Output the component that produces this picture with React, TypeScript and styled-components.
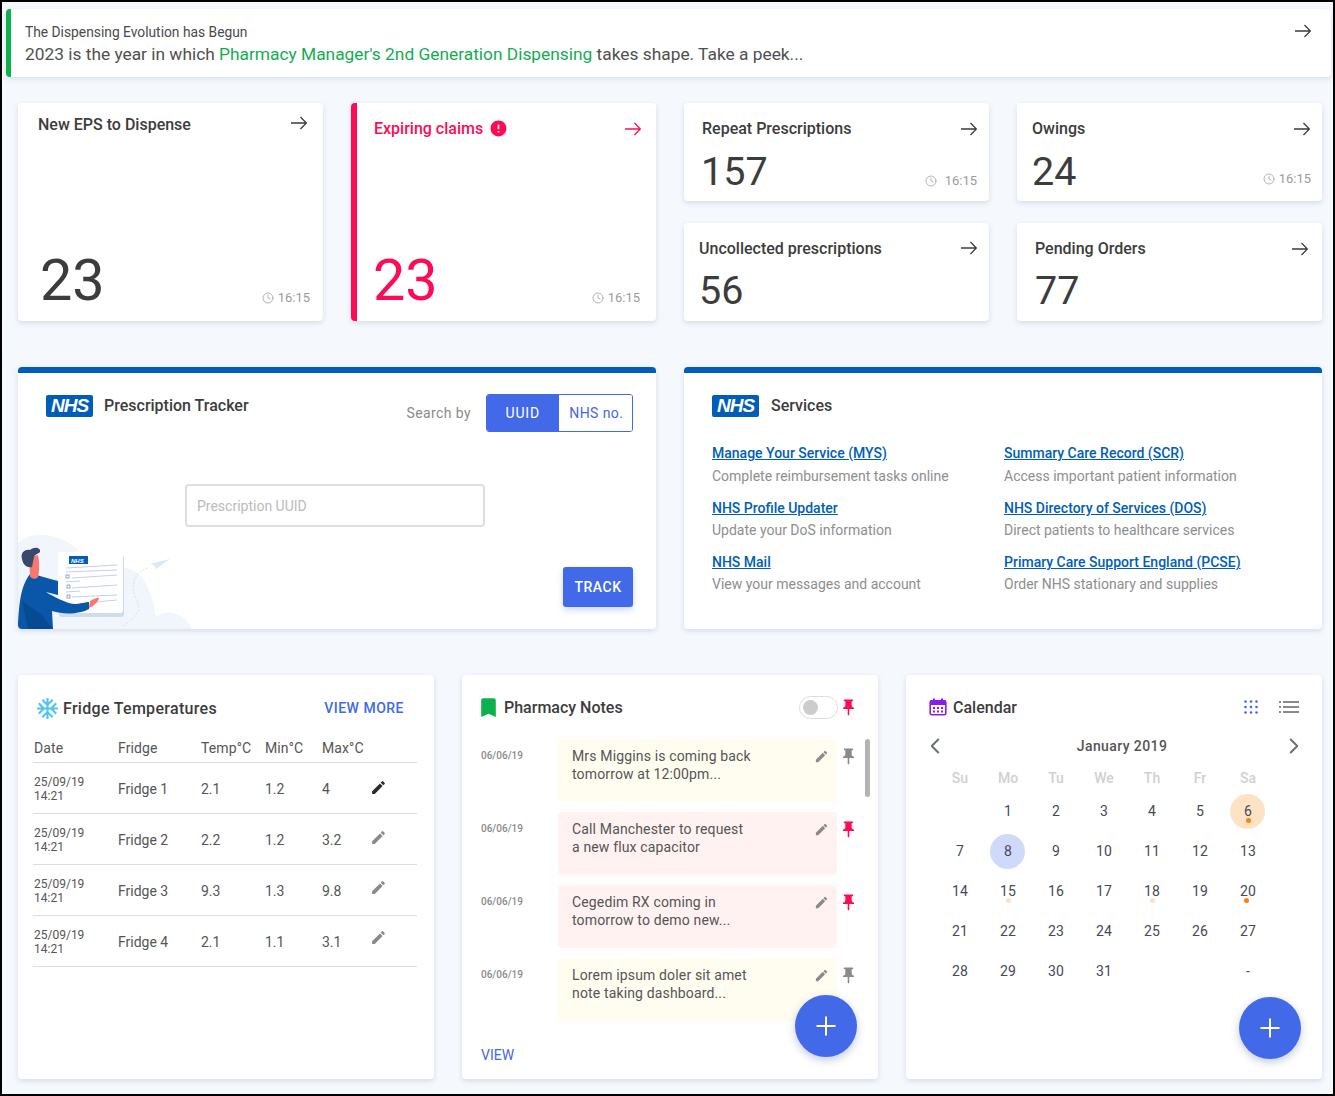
import styled, { createGlobalStyle } from 'styled-components';
import { ChevronLeft, ChevronRight, Clock, Plus } from 'lucide-react';
import { MdAcUnit, MdBookmark, MdEdit, MdError, MdPushPin } from 'react-icons/md';

const BLUE = '#4169e8';
const NHS_BLUE = '#005eb8';
const RED = '#ff0a54';

const GlobalStyle = createGlobalStyle`
  html, body { margin: 0; padding: 0; }
  body {
    font-family: Roboto, "Liberation Sans", sans-serif;
    color: #3c3c3c;
    background: #f5f8fd;
  }
  * { box-sizing: border-box; }
`;

function Arrow() {
  return (
    <svg width="16" height="14" viewBox="0 0 16 14" fill="none" stroke="currentColor" strokeWidth="1.3" aria-hidden="true">
      <path d="M0 7 H15 M9.5 1 L15.4 7 L9.5 13" />
    </svg>
  );
}

type StatProps = {
  title: string;
  value: number;
  time?: string;
  danger?: boolean;
  big?: boolean;
  top?: number;
  left?: number;
  arrowRight?: number;
  arrowDrop?: number;
  numberLeft?: number;
  numberLift?: number;
  timeGap?: number;
  timeRight?: number;
  timeBottom?: number;
};

function StatCard({
  title,
  value,
  time,
  danger,
  big,
  top = 16,
  left = 18,
  arrowRight = 12,
  arrowDrop = 0,
  numberLeft = 0,
  numberLift = 0,
  timeGap = 4,
  timeRight = 12,
  timeBottom = 12,
}: StatProps) {
  return (
    <Stat $big={big} $danger={danger} $top={top} $left={left}>
      <StatHead $right={arrowRight} $drop={arrowDrop}>
        <StatTitle>
          {title}
          {danger && <MdError size={19} color={RED} />}
        </StatTitle>
        <Arrow />
      </StatHead>
      <StatFoot>
        <StatNumber $big={big} $danger={danger} $left={numberLeft} $lift={numberLift}>
          {value}
        </StatNumber>
        {time && (
          <StatTime $gap={timeGap} $right={timeRight} $bottom={timeBottom}>
            <Clock size={12} strokeWidth={1.5} />
            {time}
          </StatTime>
        )}
      </StatFoot>
    </Stat>
  );
}

function NhsHeading({ children, gap = 11, lift = 1 }: { children: string; gap?: number; lift?: number }) {
  return (
    <NhsRow $gap={gap}>
      <NhsBadge>NHS</NhsBadge>
      <PanelTitle $lift={lift}>{children}</PanelTitle>
    </NhsRow>
  );
}

function TrackerArt() {
  return (
    <ArtWrap viewBox="0 0 174 94" width="174" height="94" aria-hidden="true">
      <path d="M0 8 C12 -4 42 -4 62 17 L100 34 C120 28 134 50 138 82 C146 74 166 76 174 94 L0 94Z" fill="#f1f6fd" />
      <path d="M130 33 C118 36 113 48 116 58 C118 66 124 72 119 78 C115 84 110 88 105 91" fill="none" stroke="#c4d2e8" strokeWidth="0.6" strokeDasharray="2 1.5" />
      <path d="M132 29 L152 24 L138 34 L136 30Z" fill="#dde7f6" />
      <rect x="41" y="20" width="65" height="62" rx="3" fill="#cfdcf0" />
      <rect x="40" y="17" width="65" height="61" rx="3" fill="#fff" />
      <rect x="51" y="21" width="19" height="8" fill={NHS_BLUE} />
      <ArtText x="53" y="27.5">NHS</ArtText>
      <g stroke="#b5c3e2" strokeWidth="0.8">
        <path d="M48 33 L99 30" />
        <path d="M48 37 L99 35" />
        <path d="M54 43 L99 40" />
        <path d="M48 47 L62 46" />
        <path d="M54 53 L99 50" />
        <path d="M48 57 L62 56" />
        <path d="M54 62 L99 60" />
        <path d="M78 67 L99 65" />
      </g>
      <g fill="#fff" stroke="#6d7fa8" strokeWidth="0.7">
        <rect x="48" y="40" width="3" height="3" />
        <rect x="49" y="50" width="3" height="3" />
        <rect x="49" y="60" width="3" height="3" />
      </g>
      <path d="M13 38 C20 41 30 43 40 46 L40 60 L28 57 C36 62 48 68 56 69 C62 69 68 67 71 67 L71 74 C62 79 46 80 34 76 L35 94 L3 94 C0 94 0 92 0 90 C1 72 2 50 13 38Z" fill="#0a56a8" />
      <path d="M4 66 L24 80 L35 94 L10 94Z" fill="#074a92" />
      <path d="M72 66 C75 65 78 62 81 63 C80 67 76 71 71 73Z" fill="#f9786d" />
      <path d="M11 22 L20 20 C22 30 21 38 20 42 C18 45 13 44 12 41Z" fill="#f9786d" />
      <path d="M4 24 C2 17 8 14 12 15 C17 11 23 13 22 17 C20 19 17 19 16 22 L14 32 C9 33 5 30 4 24Z" fill="#39486e" />
    </ArtWrap>
  );
}

const services = [
  ['Manage Your Service (MYS)', 'Complete reimbursement tasks online', 'Summary Care Record (SCR)', 'Access important patient information'],
  ['NHS Profile Updater', 'Update your DoS information', 'NHS Directory of Services (DOS)', 'Direct patients to healthcare services'],
  ['NHS Mail', 'View your messages and account', 'Primary Care Support England (PCSE)', 'Order NHS stationary and supplies'],
];

const fridges = [
  ['Fridge 1', '2.1', '1.2', '4'],
  ['Fridge 2', '2.2', '1.2', '3.2'],
  ['Fridge 3', '9.3', '1.3', '9.8'],
  ['Fridge 4', '2.1', '1.1', '3.1'],
];

const notes = [
  { lines: ['Mrs Miggins is coming back', 'tomorrow at 12:00pm...'], urgent: false },
  { lines: ['Call Manchester to request', 'a new flux capacitor'], urgent: true },
  { lines: ['Cegedim RX coming in', 'tomorrow to demo new...'], urgent: true },
  { lines: ['Lorem ipsum doler sit amet', 'note taking dashboard...'], urgent: false },
];

const weekDays = ['Su', 'Mo', 'Tu', 'We', 'Th', 'Fr', 'Sa'];

type Day = { label: string; fill?: string; dot?: string; dotShift?: number };

const days: Day[] = [
  { label: '' },
  ...['1', '2', '3', '4', '5'].map((label) => ({ label })),
  { label: '6', fill: '#fde3c4', dot: '#ff7f11' },
  { label: '7' },
  { label: '8', fill: '#cfd9f9' },
  ...['9', '10', '11', '12', '13', '14'].map((label) => ({ label })),
  { label: '15', dot: '#fde3c4' },
  { label: '16' },
  { label: '17' },
  { label: '18', dot: '#fde3c4' },
  { label: '19' },
  { label: '20', dot: '#ff7f11', dotShift: -2 },
  ...['21', '22', '23', '24', '25', '26', '27', '28', '29', '30', '31', '', ''].map((label) => ({ label })),
  { label: '-' },
];

export default function App() {
  return (
    <Page>
      <GlobalStyle />
      <Banner>
        <BannerText>
          <BannerTitle>The Dispensing Evolution has Begun</BannerTitle>
          <BannerBody>
            2023 is the year in which <Green>Pharmacy Manager's 2nd Generation Dispensing</Green> takes shape. Take a peek...
          </BannerBody>
        </BannerText>
        <Arrow />
      </Banner>

      <Content>
        <StatGrid>
          <StatCard big title="New EPS to Dispense" value={23} time="16:15" top={12} left={20} arrowRight={16} arrowDrop={-1} numberLeft={2} timeRight={13} timeBottom={15} />
          <StatCard big danger title="Expiring claims" value={23} time="16:15" top={16} left={17} arrowRight={15} arrowDrop={1} numberLeft={-1} timeRight={16} timeBottom={15} />
          <StatCard title="Repeat Prescriptions" value={157} time="16:15" arrowDrop={1} numberLeft={-1} timeGap={8} />
          <StatCard title="Owings" value={24} time="16:15" left={15} arrowDrop={1} timeRight={11} timeBottom={14} />
          <StatCard title="Uncollected prescriptions" value={56} left={15} numberLift={1} />
          <StatCard title="Pending Orders" value={77} arrowRight={14} arrowDrop={1} numberLift={1} />
        </StatGrid>

        <NhsGrid>
          <TrackerPanel>
            <TrackerHead>
              <NhsHeading>Prescription Tracker</NhsHeading>
              <SearchBy>
                <SearchLabel>Search by</SearchLabel>
                <Toggle>
                  <ToggleOption $active>UUID</ToggleOption>
                  <ToggleOption>NHS no.</ToggleOption>
                </Toggle>
              </SearchBy>
            </TrackerHead>
            <UuidInput placeholder="Prescription UUID" />
            <TrackRow>
              <TrackButton>TRACK</TrackButton>
            </TrackRow>
            <TrackerArt />
          </TrackerPanel>

          <ServicesPanel>
            <NhsHeading gap={12} lift={2}>Services</NhsHeading>
            <ServiceList>
              {services.map(([a, b, c, d]) => (
                <ServiceRow key={a}>
                  <div>
                    <ServiceLink href="#">{a}</ServiceLink>
                    <ServiceText>{b}</ServiceText>
                  </div>
                  <div>
                    <ServiceLink href="#">{c}</ServiceLink>
                    <ServiceText>{d}</ServiceText>
                  </div>
                </ServiceRow>
              ))}
            </ServiceList>
          </ServicesPanel>
        </NhsGrid>

        <BottomGrid>
          <FridgePanel>
            <FridgeHead>
              <FridgeTitle>
                <MdAcUnit size={25} color="#4fc3f7" />
                Fridge Temperatures
              </FridgeTitle>
              <ViewMore href="#">VIEW MORE</ViewMore>
            </FridgeHead>
            <FridgeTable>
              <thead>
                <tr>
                  <FridgeTh $width={84}>Date</FridgeTh>
                  <FridgeTh $width={83}>Fridge</FridgeTh>
                  <FridgeTh $width={64}>Temp°C</FridgeTh>
                  <FridgeTh $width={57}>Min°C</FridgeTh>
                  <FridgeTh $width={50}>Max°C</FridgeTh>
                  <FridgeTh />
                </tr>
              </thead>
              <tbody>
                {fridges.map((row, i) => (
                  <tr key={row[0]}>
                    <FridgeTd>
                      <DateCell>
                        25/09/19
                        <br />
                        14:21
                      </DateCell>
                    </FridgeTd>
                    {row.map((cell, j) => (
                      <FridgeTd key={j}>{cell}</FridgeTd>
                    ))}
                    <FridgeTd>
                      <EditWrap $row={i}>
                        <MdEdit size={17} color={i === 0 ? '#2b2b2b' : '#8a8a8a'} />
                      </EditWrap>
                    </FridgeTd>
                  </tr>
                ))}
              </tbody>
            </FridgeTable>
          </FridgePanel>

          <NotesPanel>
            <NotesHead>
              <PanelHeading $gap={3} $indent={-5}>
                <MdBookmark size={25} color="#0db14b" />
                Pharmacy Notes
              </PanelHeading>
              <NotesTools>
                <Switch>
                  <SwitchKnob />
                </Switch>
                <MdPushPin size={19} color={RED} />
              </NotesTools>
            </NotesHead>
            <NotesScroller>
              <ScrollThumb />
              {notes.map((note) => (
                <NoteRow key={note.lines[0]}>
                  <NoteDate>06/06/19</NoteDate>
                  <NoteBox $urgent={note.urgent}>
                    <NoteText>
                      {note.lines[0]}
                      <br />
                      {note.lines[1]}
                    </NoteText>
                    <MdEdit size={15} color="#8a8a8a" />
                  </NoteBox>
                  <NotePin>
                    <MdPushPin size={19} color={note.urgent ? RED : '#8a8a8a'} />
                  </NotePin>
                </NoteRow>
              ))}
            </NotesScroller>
            <ViewLink href="#">VIEW</ViewLink>
            <Fab $bottom={22} $right={21}>
              <Plus size={30} strokeWidth={1.6} />
            </Fab>
          </NotesPanel>

          <CalendarPanel>
            <CalendarHead>
              <PanelHeading $gap={6} $indent={0}>
                <svg width="18" height="18" viewBox="0 0 18 18" aria-hidden="true">
                  <rect x="1.2" y="2.8" width="15.6" height="14" rx="1.6" fill="#fff" stroke="#8a1cf0" strokeWidth="1.6" />
                  <rect x="1" y="2.5" width="16" height="4.5" fill="#8a1cf0" />
                  <rect x="4" y="0.5" width="2" height="3" fill="#8a1cf0" />
                  <rect x="12" y="0.5" width="2" height="3" fill="#8a1cf0" />
                  <g fill="#8a1cf0">
                    {[4, 8, 12].map((x) =>
                      [9, 12.5].map((y) => <rect key={`${x}-${y}`} x={x} y={y} width="2" height="2" />)
                    )}
                  </g>
                </svg>
                Calendar
              </PanelHeading>
              <CalendarTools>
                <svg width="14" height="14" viewBox="0 0 14 14" aria-hidden="true">
                  <g fill={BLUE}>
                    {[1.5, 7, 12.5].map((x) =>
                      [1.5, 7, 12.5].map((y) => <circle key={`${x}-${y}`} cx={x} cy={y} r="1.3" />)
                    )}
                  </g>
                </svg>
                <svg width="20" height="14" viewBox="0 0 20 14" aria-hidden="true">
                  <g fill="#8a8a8a">
                    {[1, 6, 11].map((y) => (
                      <g key={y}>
                        <rect x="0" y={y} width="2" height="2" />
                        <rect x="4" y={y} width="16" height="2" />
                      </g>
                    ))}
                  </g>
                </svg>
              </CalendarTools>
            </CalendarHead>
            <MonthRow>
              <ChevronLeft size={26} strokeWidth={1.8} color="#6b6f82" />
              <MonthName>January 2019</MonthName>
              <ChevronRight size={26} strokeWidth={1.8} color="#6b6f82" />
            </MonthRow>
            <DayGrid>
              {weekDays.map((d) => (
                <WeekDay key={d}>{d}</WeekDay>
              ))}
              {days.map((day, i) => (
                <DayCell key={i}>
                  {day.fill && <DayCircle $fill={day.fill} />}
                  <DayLabel>{day.label}</DayLabel>
                  {day.dot && <DayDot $color={day.dot} $shift={day.dotShift ?? 0} />}
                </DayCell>
              ))}
            </DayGrid>
            <Fab $bottom={20} $right={21}>
              <Plus size={30} strokeWidth={1.6} />
            </Fab>
          </CalendarPanel>
        </BottomGrid>
      </Content>
    </Page>
  );
}

const Page = styled.div`
  width: 1335px;
  height: 1096px;
  border: 2px solid #000;
  background: #f5f8fd;
  padding-top: 7px;
  overflow: hidden;
`;

const Banner = styled.div`
  margin: 0 2px 0 4px;
  height: 68px;
  background: #fff;
  border-left: 5px solid #0db14b;
  border-radius: 4px;
  box-shadow: 0 2px 5px rgba(90, 110, 150, 0.18);
  padding: 13px 20px 0 14px;
  display: flex;
  justify-content: space-between;
  align-items: flex-start;
  svg {
    margin-top: 2px;
  }
`;

const BannerText = styled.div`
  display: flex;
  flex-direction: column;
`;

const BannerTitle = styled.div`
  font-size: 13.8px;
  line-height: 20px;
  color: #4a4a4a;
`;

const BannerBody = styled.div`
  font-size: 17.33px;
  line-height: 24px;
  color: #505050;
`;

const Green = styled.span`
  color: #12ad52;
`;

const Content = styled.div`
  padding: 26px 11px 0 16px;
`;

const StatGrid = styled.div`
  display: grid;
  grid-template-columns: repeat(4, 305px);
  grid-template-rows: 98px 98px;
  gap: 22px 28px;
`;

const Stat = styled.div<{ $big?: boolean; $danger?: boolean; $top: number; $left: number }>`
  grid-row: ${(p) => (p.$big ? 'span 2' : 'auto')};
  display: flex;
  flex-direction: column;
  justify-content: space-between;
  background: #fff;
  border-radius: 4px;
  border-left: ${(p) => (p.$danger ? `6px solid ${RED}` : 'none')};
  box-shadow: 0 2px 5px rgba(90, 110, 150, 0.2);
  padding: ${(p) => `${p.$top}px 0 0 ${p.$left}px`};
  color: ${(p) => (p.$danger ? RED : '#3c3c3c')};
`;

const StatHead = styled.div<{ $right: number; $drop: number }>`
  display: flex;
  justify-content: space-between;
  align-items: center;
  height: 18px;
  padding-right: ${(p) => p.$right}px;
  > svg {
    margin-top: ${(p) => p.$drop * 2}px;
  }
`;

const StatTitle = styled.div`
  display: flex;
  align-items: center;
  gap: 6px;
  font-size: 16px;
  font-weight: 500;
`;

const StatFoot = styled.div`
  display: flex;
  justify-content: space-between;
  align-items: flex-end;
`;

const StatNumber = styled.div<{ $big?: boolean; $danger?: boolean; $left: number; $lift: number }>`
  font-size: ${(p) => (p.$big ? 57.6 : 39.5)}px;
  line-height: ${(p) => (p.$big ? 80 : 58)}px;
  margin-left: ${(p) => p.$left}px;
  margin-bottom: ${(p) => p.$lift}px;
  color: ${(p) => (p.$danger ? RED : '#3c3c3c')};
`;

const StatTime = styled.div<{ $gap: number; $right: number; $bottom: number }>`
  display: flex;
  align-items: center;
  gap: ${(p) => p.$gap}px;
  font-size: 13px;
  line-height: 16px;
  color: #9b9b9b;
  margin-right: ${(p) => p.$right}px;
  margin-bottom: ${(p) => p.$bottom}px;
`;

const NhsGrid = styled.div`
  display: grid;
  grid-template-columns: repeat(2, 638px);
  gap: 28px;
  margin-top: 46px;
  height: 262px;
`;

const NhsPanel = styled.div`
  position: relative;
  overflow: hidden;
  background: #fff;
  border-top: 6px solid ${NHS_BLUE};
  border-radius: 4px;
  box-shadow: 0 2px 5px rgba(90, 110, 150, 0.2);
`;

const TrackerPanel = styled(NhsPanel)`
  padding: 22px 23px 0 28px;
`;

const ServicesPanel = styled(NhsPanel)`
  padding: 22px 28px 0 28px;
`;

const TrackerHead = styled.div`
  display: flex;
  justify-content: space-between;
  align-items: flex-start;
  height: 39px;
`;

const NhsRow = styled.div<{ $gap: number }>`
  display: flex;
  align-items: center;
  gap: ${(p) => p.$gap}px;
`;

const NhsBadge = styled.div`
  width: 47px;
  height: 22px;
  border-radius: 2px;
  background: ${NHS_BLUE};
  color: #fff;
  font-family: "Liberation Sans", Arial, sans-serif;
  font-size: 19px;
  font-weight: 700;
  font-style: italic;
  line-height: 22px;
  text-align: center;
  letter-spacing: -1px;
`;

const PanelTitle = styled.div<{ $lift: number }>`
  font-size: 16px;
  font-weight: 500;
  color: #3c3c3c;
  margin-top: ${(p) => -p.$lift}px;
`;

const SearchBy = styled.div`
  display: flex;
  align-items: center;
  gap: 15px;
  margin-top: -1px;
`;

const SearchLabel = styled.div`
  font-size: 14px;
  color: #8a8a8a;
  letter-spacing: 0.4px;
`;

const Toggle = styled.div`
  display: flex;
  width: 147px;
  height: 38px;
  border: 1px solid ${BLUE};
  border-radius: 3px;
  overflow: hidden;
`;

const ToggleOption = styled.div<{ $active?: boolean }>`
  flex: 1;
  display: flex;
  align-items: center;
  justify-content: center;
  font-size: 14px;
  letter-spacing: ${(p) => (p.$active ? 0.8 : 0.4)}px;
  padding-left: ${(p) => (p.$active ? 0 : 2)}px;
  background: ${(p) => (p.$active ? BLUE : '#fff')};
  color: ${(p) => (p.$active ? '#fff' : BLUE)};
`;

const UuidInput = styled.input`
  display: block;
  width: 300px;
  height: 43px;
  margin: 50px 0 0 139px;
  padding: 0 10px;
  border: 2px solid #dedede;
  border-radius: 4px;
  font-family: inherit;
  font-size: 14px;
  outline: none;
  &::placeholder {
    color: #bbbbbb;
  }
`;

const TrackRow = styled.div`
  display: flex;
  justify-content: flex-end;
  margin-top: 40px;
`;

const TrackButton = styled.button`
  width: 70px;
  height: 40px;
  border: none;
  border-radius: 3px;
  background: ${BLUE};
  color: #fff;
  font-family: inherit;
  font-size: 14px;
  font-weight: 500;
  letter-spacing: 0.5px;
  box-shadow: 0 3px 6px rgba(65, 105, 232, 0.25);
`;

const ArtWrap = styled.svg`
  position: absolute;
  left: 0;
  bottom: 0;
`;

const ArtText = styled.text`
  font-family: "Liberation Sans", Arial, sans-serif;
  font-size: 6px;
  font-weight: 700;
  font-style: italic;
  fill: #fff;
`;

const ServiceList = styled.div`
  display: flex;
  flex-direction: column;
  gap: 10px;
  margin-top: 26px;
`;

const ServiceLink = styled.a`
  display: block;
  width: fit-content;
  font-size: 14px;
  font-weight: 500;
  line-height: 20px;
  color: ${NHS_BLUE};
  text-decoration: underline;
`;

const ServiceText = styled.div`
  font-size: 14px;
  line-height: 20px;
  margin-top: 3px;
  color: #8e8e8e;
`;

const ServiceRow = styled.div`
  display: grid;
  grid-template-columns: 292px 1fr;
  height: 44px;
  & + & ${ServiceLink} {
    margin-top: 1px;
  }
  & + & ${ServiceText} {
    margin-top: 2px;
  }
`;

const BottomGrid = styled.div`
  display: grid;
  grid-template-columns: repeat(3, 416px);
  gap: 28px;
  margin-top: 46px;
  height: 404px;
`;

const BottomPanel = styled.div`
  position: relative;
  background: #fff;
  border-radius: 4px;
  box-shadow: 0 2px 5px rgba(90, 110, 150, 0.2);
`;

const FridgePanel = styled(BottomPanel)`
  padding: 20px 17px 0 15px;
`;

const FridgeHead = styled.div`
  display: flex;
  justify-content: space-between;
  align-items: center;
  height: 26px;
  padding-right: 13px;
`;

const FridgeTitle = styled.div`
  display: flex;
  align-items: center;
  gap: 3px;
  margin-left: 2px;
  font-size: 16px;
  font-weight: 500;
  letter-spacing: 0.3px;
`;

const ViewMore = styled.a`
  font-size: 14px;
  font-weight: 500;
  letter-spacing: 0.5px;
  color: ${BLUE};
  text-decoration: none;
`;

const FridgeTable = styled.table`
  width: 384px;
  margin-top: 15px;
  border-collapse: collapse;
  table-layout: fixed;
`;

const FridgeTh = styled.th<{ $width?: number }>`
  width: ${(p) => (p.$width ? `${p.$width}px` : 'auto')};
  height: 26px;
  padding: 0 0 1px 1px;
  text-align: left;
  font-size: 14px;
  font-weight: 400;
  letter-spacing: 0.1px;
  color: #555;
  border-bottom: 1px solid #ddd;
`;

const FridgeTd = styled.td`
  height: 51px;
  padding: 2px 0 0 1px;
  font-size: 14px;
  color: #555;
  border-bottom: 1px solid #ddd;
`;

const EditWrap = styled.div<{ $row: number }>`
  margin: ${(p) => -2 * p.$row - 2}px 0 0 -2px;
  svg {
    display: block;
  }
`;

const DateCell = styled.div`
  font-size: 12px;
  line-height: 14px;
`;

const NotesPanel = styled(BottomPanel)`
  padding: 20px 0 0 19px;
`;

const NotesHead = styled.div`
  display: flex;
  justify-content: space-between;
  align-items: center;
  height: 24px;
  padding-right: 20px;
`;

const PanelHeading = styled.div<{ $gap: number; $indent: number }>`
  display: flex;
  align-items: center;
  gap: ${(p) => p.$gap}px;
  margin-left: ${(p) => p.$indent}px;
  font-size: 16px;
  font-weight: 500;
`;

const NotesTools = styled.div`
  display: flex;
  align-items: center;
  gap: 1px;
`;

const Switch = styled.div`
  width: 39px;
  height: 23px;
  padding: 3px 0 0 3px;
  border: 1px solid #ddd;
  border-radius: 12px;
  background: #fff;
`;

const SwitchKnob = styled.div`
  width: 15px;
  height: 15px;
  border-radius: 50%;
  background: #ccc;
`;

const NotesScroller = styled.div`
  position: relative;
  display: flex;
  flex-direction: column;
  gap: 10px;
  margin-top: 20px;
  height: 292px;
`;

const ScrollThumb = styled.div`
  position: absolute;
  top: 0;
  right: 8px;
  width: 5px;
  height: 58px;
  border-radius: 3px;
  background: #b4b4b4;
`;

const NoteRow = styled.div`
  display: flex;
  align-items: flex-start;
`;

const NoteDate = styled.div`
  width: 77px;
  padding-top: 11px;
  font-size: 10px;
  font-weight: 500;
  line-height: 12px;
  color: #8a8a8a;
`;

const NoteBox = styled.div<{ $urgent: boolean }>`
  display: flex;
  justify-content: space-between;
  align-items: flex-start;
  width: 279px;
  height: 63px;
  padding: 8px 8px 0 14px;
  border-radius: 4px;
  background: ${(p) => (p.$urgent ? '#fff2f1' : '#fffdf0')};
  svg {
    margin-top: 2px;
  }
`;

const NoteText = styled.div`
  font-size: 14px;
  line-height: 18px;
  letter-spacing: 0.15px;
  color: #555;
`;

const NotePin = styled.div`
  padding: 8px 0 0 2px;
`;

const ViewLink = styled.a`
  position: absolute;
  left: 19px;
  top: 372px;
  font-size: 14px;
  color: ${BLUE};
  text-decoration: none;
`;

const Fab = styled.button<{ $bottom: number; $right: number }>`
  position: absolute;
  right: ${(p) => p.$right}px;
  bottom: ${(p) => p.$bottom}px;
  display: flex;
  align-items: center;
  justify-content: center;
  width: 62px;
  height: 62px;
  border: none;
  border-radius: 50%;
  background: ${BLUE};
  color: #fff;
  box-shadow: 0 3px 8px rgba(40, 60, 130, 0.28);
`;

const CalendarPanel = styled(BottomPanel)`
  padding: 20px 23px 0 23px;
`;

const CalendarHead = styled.div`
  display: flex;
  justify-content: space-between;
  align-items: center;
  height: 24px;
`;

const CalendarTools = styled.div`
  display: flex;
  align-items: center;
  gap: 21px;
`;

const MonthRow = styled.div`
  display: flex;
  justify-content: space-between;
  align-items: center;
  height: 20px;
  margin: 17px -8px 0 -7px;
`;

const MonthName = styled.div`
  margin-left: 15px;
  font-size: 14px;
  font-weight: 500;
  letter-spacing: 0.4px;
  color: #555;
`;

const DayGrid = styled.div`
  display: grid;
  grid-template-columns: repeat(7, 48px);
  grid-template-rows: 26px repeat(5, 40px);
  margin: 9px 0 0 7px;
`;

const WeekDay = styled.div`
  display: flex;
  align-items: center;
  justify-content: center;
  font-size: 14px;
  font-weight: 500;
  color: #d0d0d0;
`;

const DayCell = styled.div`
  position: relative;
  display: flex;
  align-items: center;
  justify-content: center;
`;

const DayCircle = styled.div<{ $fill: string }>`
  position: absolute;
  width: 35px;
  height: 35px;
  margin-left: -1px;
  border-radius: 50%;
  background: ${(p) => p.$fill};
`;

const DayLabel = styled.span`
  position: relative;
  font-size: 14px;
  letter-spacing: 0.2px;
  color: #47475c;
`;

const DayDot = styled.div<{ $color: string; $shift: number }>`
  position: absolute;
  top: 27px;
  left: ${(p) => 22 + p.$shift}px;
  width: 5px;
  height: 5px;
  border-radius: 50%;
  background: ${(p) => p.$color};
`;
